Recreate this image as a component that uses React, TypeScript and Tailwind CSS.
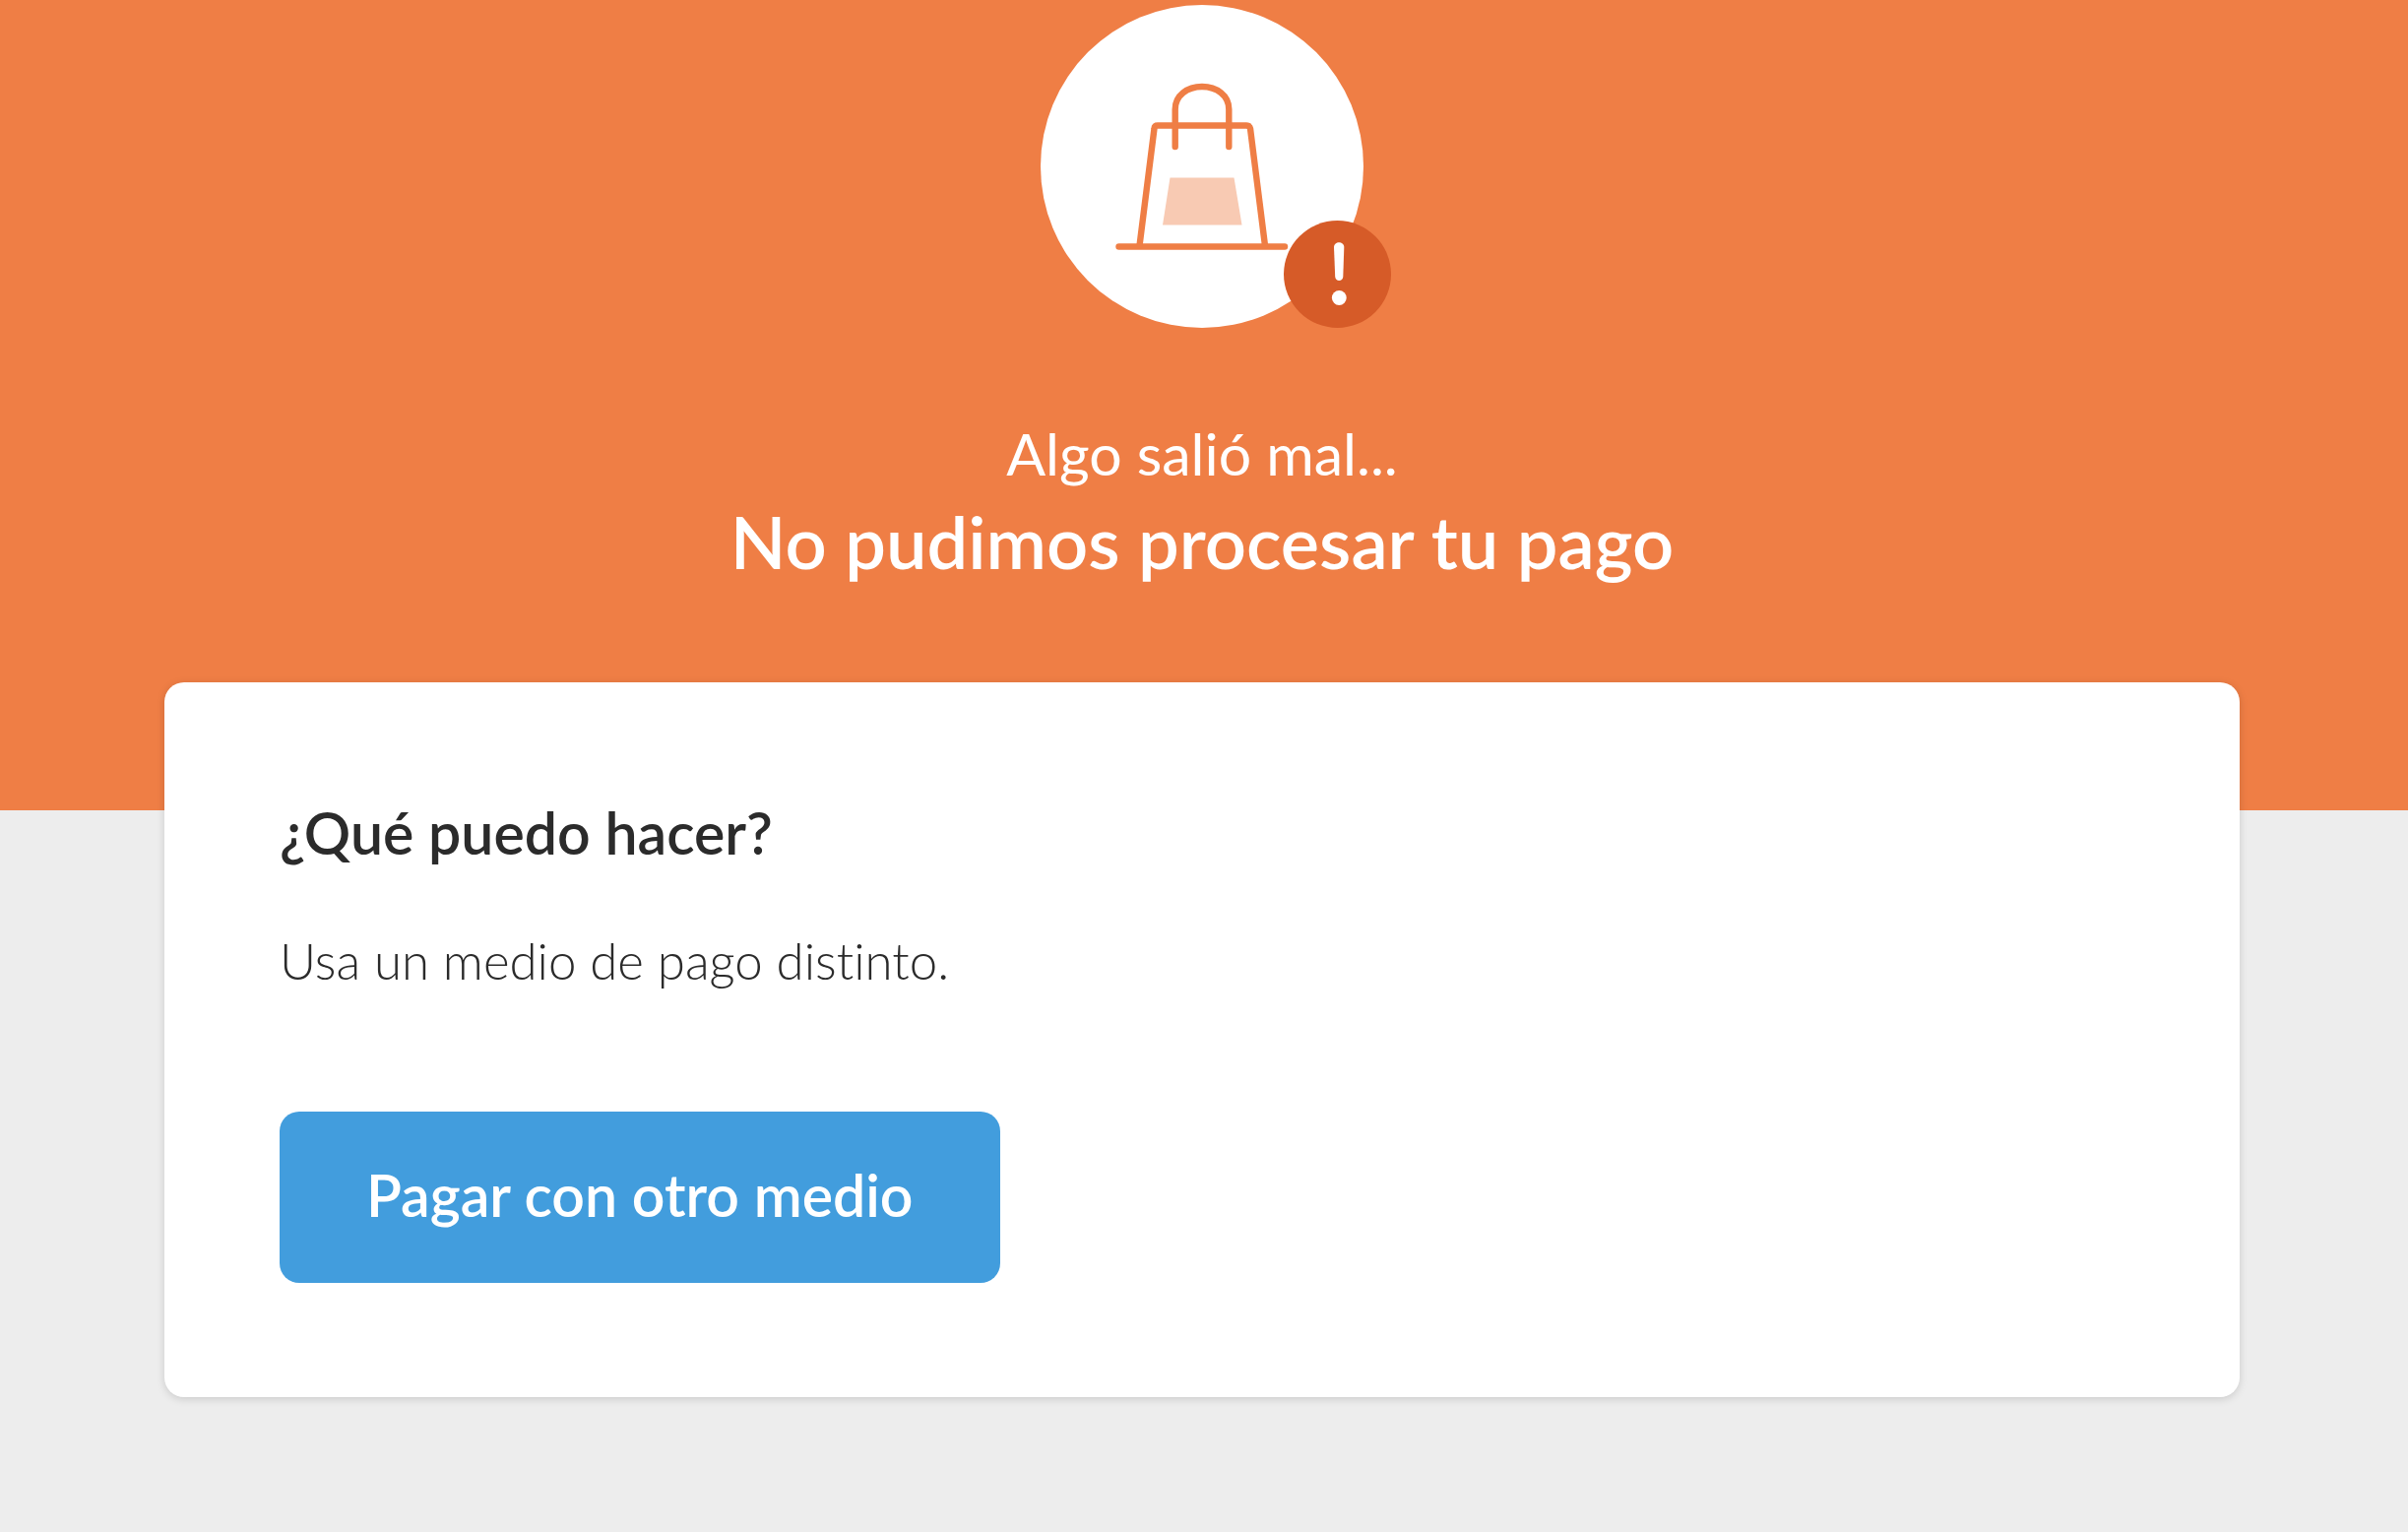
function BagIcon() {
  return (
    <svg className="block w-full h-full" viewBox="0 0 328 328" fill="none" aria-hidden="true">
      <path d="M131.500 175.500h65l8 48h-80.500z" fill="#f8cab3" />
      <g stroke="#ef7e45" strokeWidth="6.4" strokeLinecap="round" strokeLinejoin="round">
        <path d="M79.500 245.500H248" />
        <path d="M100.500 244.500L115.500 125.500Q115.800 122.500 119 122.500H209Q212.500 122.500 213 125.500L228 244.500" />
        <path d="M136.700 144V106C136.700 92 149 83 164 83S191.300 92 191.300 106V144" />
      </g>
    </svg>
  )
}

function AlertBadge() {
  return (
    <svg className="absolute -right-7 bottom-0 size-[109px]" viewBox="0 0 109 109" aria-hidden="true">
      <circle cx="54.500" cy="54.500" r="54.500" fill="#d65b28" />
      <path d="M51 27C51 20.500 61.300 20.500 61.300 27L60.300 57C60 62.200 52.500 62.200 52.200 57z" fill="#fff" />
      <circle cx="56.300" cy="78.500" r="7.400" fill="#fff" />
    </svg>
  )
}

function Header() {
  return (
    <header className="bg-[#ef7e45] pt-[5px] pb-[228px] pl-[167px] pr-[171px] text-white text-center">
      <div className="relative mx-auto size-[328px] rounded-full bg-white">
        <BagIcon />
        <AlertBadge />
      </div>
      <p className="mt-[84px] text-[59px] leading-[88px]">Algo salió mal...</p>
      <h1 className="text-[74px] leading-[90px] font-semibold">No pudimos procesar tu pago</h1>
    </header>
  )
}

function App() {
  return (
    <div className="min-h-screen bg-[#ededed] pb-32 font-['Lato',sans-serif] [font-variant-ligatures:none]">
      <Header />
      <main className="relative -mt-[130px] ml-[167px] mr-[171px] rounded-[20px] bg-white px-[117px] pt-[109px] pb-[116px] text-[#2b2b2b] shadow-[0_2px_8px_rgba(0,0,0,0.15)]">
        <h2 className="text-[59px] leading-[88px] font-semibold">¿Qué puedo hacer?</h2>
        <p className="mt-[42px] text-[51px] leading-[88px] font-light">Usa un medio de pago distinto.</p>
        <button type="button" className="mt-[109px] h-[174px] px-[88px] pb-1 rounded-[20px] bg-[#429ddd] text-white text-[59px] leading-[88px] font-semibold cursor-pointer">
          Pagar con otro medio
        </button>
      </main>
    </div>
  )
}

export default App
